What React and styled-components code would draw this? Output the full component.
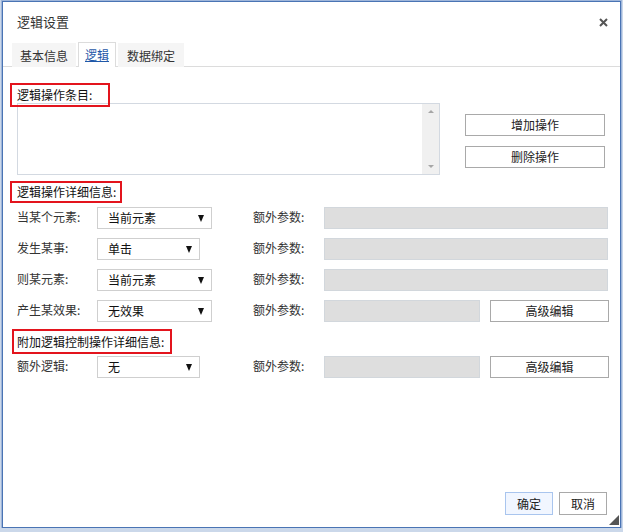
import React from "react";
import styled, { createGlobalStyle } from "styled-components";

const GlobalStyle = createGlobalStyle`
  html, body {
    margin: 0;
    padding: 0;
    background: #cbd8ea;
  }
  body {
    font-family: "Noto Sans CJK SC", "Noto Sans", "Liberation Sans", sans-serif;
    font-size: 12px;
    color: #222;
  }
  * { box-sizing: border-box; }
`;

const Dialog = styled.div`
  position: relative;
  margin: 1px 0 0 2px;
  width: 619px;
  height: 527px;
  background: #fff;
  border: 1px solid #4a74b4;
  box-shadow: 0 0 0 1px #9fb6da;
  display: flex;
  flex-direction: column;
`;

const Header = styled.div`
  height: 40px;
  display: flex;
  align-items: center;
  justify-content: space-between;
  padding: 0 10px 0 14px;
`;

const Title = styled.div`
  font-size: 13px;
  color: #333;
  line-height: 16px;
`;

const Close = styled.div`
  width: 14px;
  height: 14px;
  display: flex;
  align-items: center;
  justify-content: center;
  cursor: pointer;
`;

const TabBar = styled.div`
  height: 25px;
  display: flex;
  gap: 2px;
  padding-left: 9px;
  border-bottom: 1px solid #dcdcdc;
`;

const Tab = styled.div`
  padding: 0 ${p => p.$pad}px;
  display: flex;
  align-items: center;
  font-size: 12px;
  line-height: 14px;
  color: ${p => (p.$active ? "#1f58a8" : "#333")};
  text-decoration: ${p => (p.$active ? "underline" : "none")};
  background: ${p => (p.$active ? "#fff" : "#f5f5f5")};
  border: 1px solid ${p => (p.$active ? "#dcdcdc" : "transparent")};
  border-bottom: none;
  margin-bottom: ${p => (p.$active ? "-1px" : "0")};
  height: ${p => (p.$active ? "25px" : "24px")};
  margin-top: ${p => (p.$active ? "0" : "1px")};
`;

const Body = styled.div`
  flex: 1;
  display: flex;
  flex-direction: column;
  padding: 16px 11px 12px 14px;
`;

const RedBox = styled.div`
  position: relative;
  z-index: 1;
  align-self: flex-start;
  width: ${p => p.$width}px;
  height: ${p => p.$height}px;
  margin-left: -${p => p.$inset}px;
  margin-top: ${p => p.$top}px;
  margin-bottom: ${p => p.$bottom}px;
  padding-left: ${p => p.$inset - 2}px;
  border: 2px solid #e3141d;
  display: flex;
  align-items: center;
  font-size: 12px;
  line-height: 14px;
  color: #111;
`;

const ListRow = styled.div`
  display: flex;
  gap: 25px;
`;

const ListBox = styled.div`
  width: 423px;
  height: 72px;
  border: 1px solid #d3d9e1;
  display: flex;
  justify-content: flex-end;
`;

const ScrollBar = styled.div`
  width: 17px;
  background: #f0f0f0;
  display: flex;
  flex-direction: column;
  justify-content: space-between;
  align-items: center;
  padding: 6px 0 6px;
`;

const Arrow = styled.div`
  width: 0;
  height: 0;
  border-left: 3px solid transparent;
  border-right: 3px solid transparent;
  ${p => (p.$up ? "border-bottom: 3px solid #a6a6a6;" : "border-top: 3px solid #a6a6a6;")}
`;

const ButtonColumn = styled.div`
  display: flex;
  flex-direction: column;
  gap: 10px;
  padding-top: 11px;
`;

const Button = styled.button`
  width: ${p => p.$width}px;
  height: ${p => p.$height || 22}px;
  background: ${p => (p.$primary ? "#f1f6ff" : "#fff")};
  border: 1px solid ${p => (p.$primary ? "#a9c5ee" : "#a9a9a9")};
  font-family: inherit;
  font-size: 12px;
  line-height: 14px;
  color: #222;
  padding: 0;
  cursor: pointer;
`;

const Rows = styled.div`
  display: flex;
  flex-direction: column;
  gap: 9px;
`;

const Row = styled.div`
  display: grid;
  grid-template-columns: 80px 156px 71px 1fr;
  align-items: center;
  height: 22px;
`;

const Label = styled.div`
  font-size: 12px;
  line-height: 14px;
  color: #333;
  margin-top: -3px;
`;

const Select = styled.div`
  width: ${p => p.$width}px;
  height: 22px;
  border: 1px solid #cfcfcf;
  background: #fff;
  display: flex;
  align-items: center;
  justify-content: space-between;
  padding: 0 7px 0 10px;
  font-size: 12px;
  line-height: 14px;
  color: #111;
`;

const Caret = styled.span`
  width: 0;
  height: 0;
  border-left: 3.5px solid transparent;
  border-right: 3.5px solid transparent;
  border-top: 7px solid #111;
`;

const ParamCell = styled.div`
  display: flex;
  gap: 10px;
  align-items: center;
`;

const Input = styled.div`
  width: ${p => (p.$width ? `${p.$width}px` : "284px")};
  height: 22px;
  background: #dedede;
  border: 1px solid #d2d7dc;
`;

const Footer = styled.div`
  margin-top: auto;
  display: flex;
  justify-content: flex-end;
  gap: 6px;
  padding-right: 2px;
`;

const Grip = styled.div`
  position: absolute;
  right: 1px;
  bottom: 2px;
  width: 0;
  height: 0;
  border-left: 10px solid transparent;
  border-bottom: 10px solid #555;
`;

const detail = [
  { label: "当某个元素:", value: "当前元素", w: 115 },
  { label: "发生某事:", value: "单击", w: 103 },
  { label: "则某元素:", value: "当前元素", w: 115 },
  { label: "产生某效果:", value: "无效果", w: 115, edit: true },
];

function ParamRow({ label, value, w, edit }) {
  return (
    <Row>
      <Label>{label}</Label>
      <Select $width={w}>
        <span>{value}</span>
        <Caret />
      </Select>
      <Label>额外参数:</Label>
      {edit ? (
        <ParamCell>
          <Input $width={156} />
          <Button $width={119}>高级编辑</Button>
        </ParamCell>
      ) : (
        <Input />
      )}
    </Row>
  );
}

export default function App() {
  return (
    <>
      <GlobalStyle />
      <Dialog>
        <Header>
          <Title>逻辑设置</Title>
          <Close>
            <svg width="9" height="9" viewBox="0 0 9 9">
              <path d="M1 1 L8 8 M8 1 L1 8" stroke="#555" strokeWidth="2" />
            </svg>
          </Close>
        </Header>
        <TabBar>
          <Tab $pad={7}>基本信息</Tab>
          <Tab $pad={6} $active>逻辑</Tab>
          <Tab $pad={8}>数据绑定</Tab>
        </TabBar>
        <Body>
          <RedBox $width={100} $height={24} $inset={7} $top={0} $bottom={-4}>
            逻辑操作条目:
          </RedBox>
          <ListRow>
            <ListBox>
              <ScrollBar>
                <Arrow $up />
                <Arrow />
              </ScrollBar>
            </ListBox>
            <ButtonColumn>
              <Button $width={140} $height={22}>增加操作</Button>
              <Button $width={140} $height={22}>删除操作</Button>
            </ButtonColumn>
          </ListRow>
          <RedBox $width={112} $height={22} $inset={7} $top={6} $bottom={4}>
            逻辑操作详细信息:
          </RedBox>
          <Rows>
            {detail.map(d => (
              <ParamRow key={d.label} {...d} />
            ))}
          </Rows>
          <RedBox $width={160} $height={25} $inset={5} $top={7} $bottom={2}>
            附加逻辑控制操作详细信息:
          </RedBox>
          <ParamRow label="额外逻辑:" value="无" w={103} edit />
          <Footer>
            <Button $primary $width={48} $height={23}>确定</Button>
            <Button $width={48} $height={23}>取消</Button>
          </Footer>
        </Body>
        <Grip />
      </Dialog>
    </>
  );
}
